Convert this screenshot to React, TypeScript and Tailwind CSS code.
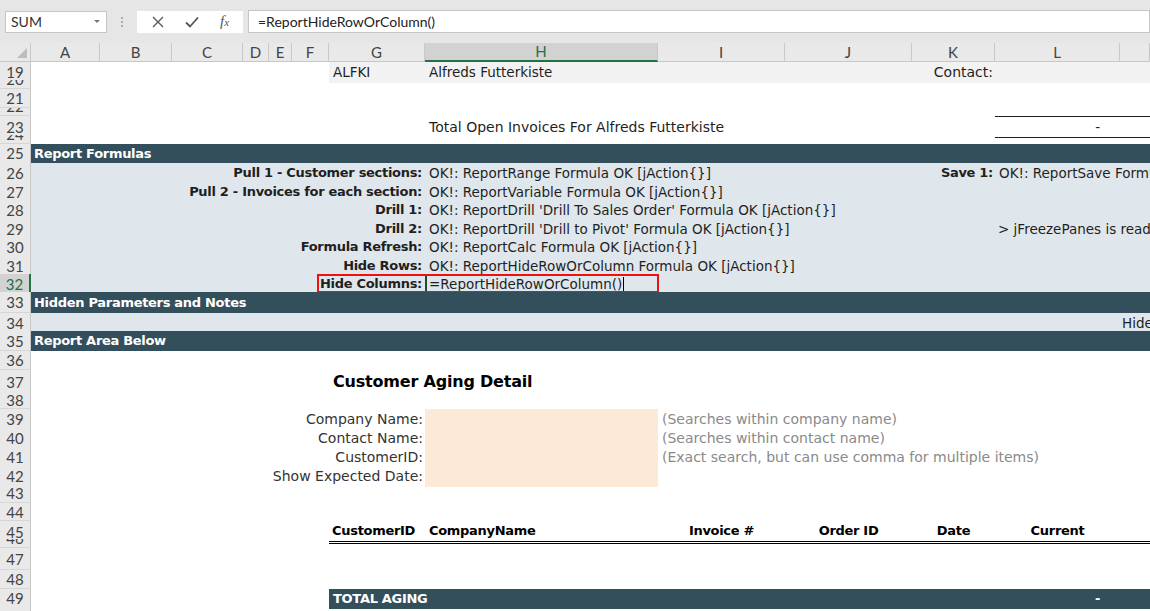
import React from 'react';

const GRID =
  'grid grid-cols-[31px_69px_72px_71px_26px_23px_37px_96px_233px_127px_127px_83px_125px_1fr]';
const INNER =
  'grid grid-cols-[69px_72px_71px_26px_23px_37px_96px_233px_127px_127px_83px_125px_1fr]';

const BODY = 'font-["DejaVu_Sans",sans-serif] text-[13.5px] text-[#1f1f1f]';
const BOLD = 'font-["DejaVu_Sans",sans-serif] text-[13px] tracking-[-0.3px] font-bold';

function RowNum({ n, active, short }: { n: number; active?: boolean; short?: boolean }) {
  const base = `col-[1/2] flex justify-center overflow-hidden font-["Lato",sans-serif] text-[15px] ${short ? 'items-end' : 'items-center'}`;
  return (
    <div
      className={
        active
          ? `${base} border-r-2 border-r-[#217346] border-b border-b-[#c8c8c8] bg-[#d2d2d2] text-[#217346]`
          : `${base} border-r border-r-[#c8c8c8] border-b border-b-[#d6d6d6] bg-[#e9e9e9] text-[#444]`
      }
    >
      <span className="leading-[18px]">{n}</span>
    </div>
  );
}

function Row({
  n,
  h,
  active,
  short,
  children,
}: {
  n: number;
  h: string;
  active?: boolean;
  short?: boolean;
  children?: React.ReactNode;
}) {
  return (
    <div className={`${GRID} ${h} relative`}>
      <RowNum n={n} active={active} short={short} />
      {children}
    </div>
  );
}

function Band({ title }: { title: string }) {
  return (
    <div className={`col-[2/15] flex items-center bg-[#344f5c] pl-[3px] text-white ${BOLD}`}>
      {title}
    </div>
  );
}

function FormulaRow({
  n,
  h,
  label,
  value,
  right,
}: {
  n: number;
  h: string;
  label: string;
  value: string;
  right?: React.ReactNode;
}) {
  return (
    <Row n={n} h={h}>
      <div className={`col-[2/15] ${INNER} bg-[#dfe7ec] ${BODY}`}>
        <div className={`col-[1/8] flex items-center justify-end whitespace-nowrap pr-[3px] ${BOLD}`}>
          {label}
        </div>
        <div className="col-[8/11] flex items-center overflow-hidden whitespace-nowrap pl-[4px]">{value}</div>
        {right}
      </div>
    </Row>
  );
}

export default function App() {
  return (
    <div className="h-[611px] w-[1150px] overflow-hidden bg-white">
      {/* formula bar */}
      <div className="flex h-[43px] items-center bg-[#e6e6e6] pl-[5px]">
        <div className='flex h-[22px] w-[102px] items-center justify-between border border-[#c6c6c6] bg-white pl-[5px] pr-[6px] font-["Lato",sans-serif] text-[14px] text-[#333]'>
          <span>SUM</span>
          <span className="h-0 w-0 border-x-[3px] border-t-[3px] border-x-transparent border-t-[#777]" />
        </div>
        <div className="flex w-[30px] flex-col items-center justify-center gap-[2px]">
          <span className="h-[2px] w-[2px] bg-[#aaa]" />
          <span className="h-[2px] w-[2px] bg-[#aaa]" />
          <span className="h-[2px] w-[2px] bg-[#aaa]" />
        </div>
        <div className="flex h-[22px] w-[106px] items-center justify-around bg-white px-[4px]">
          <svg width="14" height="14" viewBox="0 0 14 14" fill="none" stroke="#555" strokeWidth="1.3">
            <path d="M2 2 L12 12 M12 2 L2 12" />
          </svg>
          <svg width="16" height="14" viewBox="0 0 16 14" fill="none" stroke="#555" strokeWidth="1.8">
            <path d="M2 7.5 L6 11.5 L14 2.5" />
          </svg>
          <span className='font-["Liberation_Serif",serif] text-[15px] italic text-[#555]'>
            f<span className="text-[11px]">x</span>
          </span>
        </div>
        <div className='ml-[5px] flex h-[23px] flex-1 items-center border border-[#c6c6c6] bg-white pl-[9px] font-["Lato",sans-serif] text-[14px] text-[#222]'>
          =ReportHideRowOrColumn()
        </div>
      </div>

      {/* column headers */}
      <div className={`${GRID} h-[19px] font-["Lato",sans-serif] text-[15px] text-[#444]`}>
        <div className="flex items-end justify-end border-r border-b border-[#c8c8c8] bg-[#e9e9e9] p-[3px]">
          <svg width="10" height="10" viewBox="0 0 10 10">
            <path d="M10 0 L10 10 L0 10 Z" fill="#bdbdbd" />
          </svg>
        </div>
        {['A', 'B', 'C', 'D', 'E', 'F', 'G'].map((c) => (
          <div key={c} className="flex items-center justify-center border-r border-b border-[#c8c8c8] bg-[#e9e9e9] leading-none">
            {c}
          </div>
        ))}
        <div className="flex items-center justify-center border-r border-r-[#c8c8c8] border-b-2 border-b-[#217346] bg-[#d2d2d2] leading-none text-[#217346]">
          H
        </div>
        {['I', 'J', 'K', 'L', ''].map((c, i) => (
          <div key={i} className="flex items-center justify-center border-r border-b border-[#c8c8c8] bg-[#e9e9e9] leading-none">
            {c}
          </div>
        ))}
      </div>

      {/* sheet rows */}
      <Row n={19} h="h-[18px]">
        <div className={`col-[8/15] flex items-center bg-[#f2f2f2] ${BODY}`}>
          <span className="w-[96px] pl-[4px]">ALFKI</span>
          <span className="w-[233px] pl-[4px]">Alfreds Futterkiste</span>
          <span className="w-[337px] pr-[2px] text-right text-[14px]">Contact:</span>
        </div>
      </Row>
      <Row n={20} h="h-[9px]" short />
      <Row n={21} h="h-[19px]" />
      <Row n={22} h="h-[8px]" short />
      <Row n={23} h="h-[19px]">
        <div className={`col-[9/13] flex items-center pl-[4px] ${BODY} text-[14px]`}>
          Total Open Invoices For Alfreds Futterkiste
        </div>
        <div className={`col-[13/15] flex items-center justify-end border-y border-[#1f1f1f] pr-[50px] ${BODY}`}>
          -
        </div>
      </Row>
      <Row n={24} h="h-[9px]" short />
      <Row n={25} h="h-[19px]">
        <Band title="Report Formulas" />
      </Row>
      <FormulaRow
        n={26}
        h="h-[19px]"
        label="Pull 1 - Customer sections:"
        value="OK!: ReportRange Formula OK [jAction{}]"
        right={
          <>
            <div className={`col-[11/12] flex items-center justify-end whitespace-nowrap pr-[2px] ${BOLD}`}>Save 1:</div>
            <div className="col-[12/14] flex items-center overflow-hidden whitespace-nowrap pl-[4px]">
              OK!: ReportSave Formula OK [jAction{}]
            </div>
          </>
        }
      />
      <FormulaRow n={27} h="h-[18px]" label="Pull 2 - Invoices for each section:" value="OK!: ReportVariable Formula OK [jAction{}]" />
      <FormulaRow n={28} h="h-[19px]" label="Drill 1:" value="OK!: ReportDrill 'Drill To Sales Order' Formula OK [jAction{}]" />
      <FormulaRow
        n={29}
        h="h-[18px]"
        label="Drill 2:"
        value="OK!: ReportDrill 'Drill to Pivot' Formula OK [jAction{}]"
        right={
          <div className="col-[12/14] flex items-center overflow-hidden whitespace-nowrap pl-[3px]">
            &gt; jFreezePanes is ready
          </div>
        }
      />
      <FormulaRow n={30} h="h-[19px]" label="Formula Refresh:" value="OK!: ReportCalc Formula OK [jAction{}]" />
      <FormulaRow n={31} h="h-[18px]" label="Hide Rows:" value="OK!: ReportHideRowOrColumn Formula OK [jAction{}]" />
      <Row n={32} h="h-[18px]" active>
        <div className={`col-[2/15] ${INNER} bg-[#dfe7ec] ${BODY}`}>
          <div className={`col-[1/8] flex items-center justify-end whitespace-nowrap pr-[3px] ${BOLD}`}>Hide Columns:</div>
          <div className="col-[8/9] flex items-center border-l-2 border-[#1e4d2b] pl-[2px]">
            =ReportHideRowOrColumn()
            <span className="ml-[1px] h-[14px] w-px bg-black" />
          </div>
        </div>
        <div className="absolute top-0 left-[317px] h-[19px] w-[342px] border-2 border-[#ee1111]" />
      </Row>
      <Row n={33} h="h-[21px]">
        <Band title="Hidden Parameters and Notes" />
      </Row>
      <Row n={34} h="h-[18px]">
        <div className={`col-[2/15] ${INNER} bg-[#dfe7ec] ${BODY}`}>
          <div className="col-[13/14] flex items-center overflow-hidden whitespace-nowrap pl-[2px]">Hide Columns</div>
        </div>
      </Row>
      <Row n={35} h="h-[20px]">
        <Band title="Report Area Below" />
      </Row>
      <Row n={36} h="h-[19px]" />
      <Row n={37} h="h-[21px]">
        <div className='col-[8/12] flex items-center pl-[4px] font-["DejaVu_Sans",sans-serif] text-[16px] tracking-[-0.2px] font-bold text-black'>
          Customer Aging Detail
        </div>
      </Row>
      <Row n={38} h="h-[18px]" />
      {[
        ['Company Name:', '(Searches within company name)', 'h-[19px]', 39],
        ['Contact Name:', '(Searches within contact name)', 'h-[19px]', 40],
        ['CustomerID:', '(Exact search, but can use comma for multiple items)', 'h-[19px]', 41],
        ['Show Expected Date:', '', 'h-[18px]', 42],
      ].map(([label, note, h, n]) => (
        <Row key={n as number} n={n as number} h={h as string}>
          <div className='col-[2/9] flex items-center justify-end pr-[2px] font-["DejaVu_Sans",sans-serif] text-[14px] text-[#333]'>
            {label}
          </div>
          <div className="col-[9/10] bg-[#fce9d6]" />
          <div className='col-[10/15] flex items-center whitespace-nowrap pl-[4px] font-["DejaVu_Sans",sans-serif] text-[14px] text-[#8a8a8a]'>
            {note}
          </div>
        </Row>
      ))}
      <Row n={43} h="h-[19px]" />
      <Row n={44} h="h-[18px]" />
      <Row n={45} h="h-[18px]">
        <div className={`col-[8/15] grid grid-cols-[96px_233px_127px_127px_83px_125px_1fr] border-b-[3px] border-double border-black text-black ${BOLD}`}>
          <div className="flex items-center pl-[3px]">CustomerID</div>
          <div className="flex items-center pl-[4px]">CompanyName</div>
          <div className="flex items-center justify-center">Invoice #</div>
          <div className="flex items-center justify-center">Order ID</div>
          <div className="flex items-center justify-center">Date</div>
          <div className="flex items-center justify-center">Current</div>
        </div>
      </Row>
      <Row n={46} h="h-[9px]" short />
      <Row n={47} h="h-[22px]" />
      <Row n={48} h="h-[19px]" />
      <Row n={49} h="h-[18px]">
        <div className={`col-[8/15] flex items-center justify-between bg-[#344f5c] pl-[4px] pr-[50px] text-white ${BOLD}`}>
          <span>TOTAL AGING</span>
          <span>-</span>
        </div>
      </Row>
      <Row n={50} h="h-[19px]" />
    </div>
  );
}
